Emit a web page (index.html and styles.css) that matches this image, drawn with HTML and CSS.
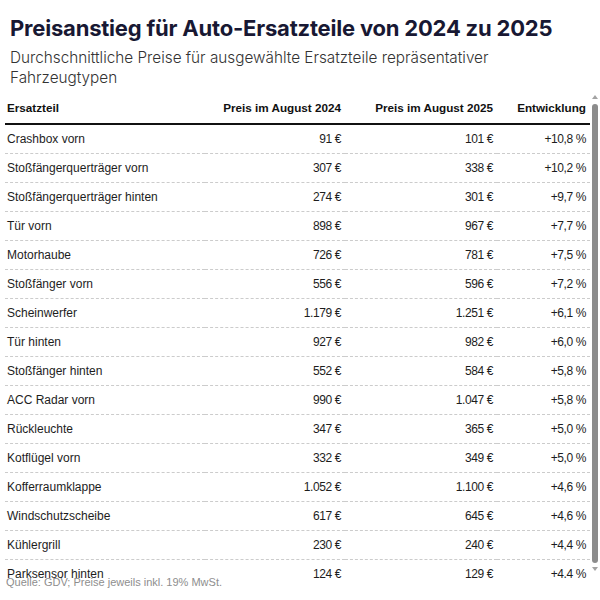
FILE: index.html
```html
<!DOCTYPE html>
<html lang="de">
<head>
<meta charset="utf-8">
<title>Preisanstieg für Auto-Ersatzteile</title>
<link rel="stylesheet" href="styles.css">
</head>
<body>
<header class="head">
  <h1 class="title">Preisanstieg für Auto-Ersatzteile von 2024 zu 2025</h1>
  <p class="subtitle">Durchschnittliche Preise für ausgewählte Ersatzteile repräsentativer Fahrzeugtypen</p>
</header>
<div class="frame">
  <div class="viewport">
    <table class="tbl">
      <colgroup><col class="c1"><col class="c2"><col class="c3"><col class="c4"></colgroup>
      <thead>
        <tr><th class="left">Ersatzteil</th><th>Preis im August 2024</th><th>Preis im August 2025</th><th>Entwicklung</th></tr>
      </thead>
      <tbody>
        <tr><td class="left">Crashbox vorn</td><td>91 €</td><td>101 €</td><td>+10,8 %</td></tr>
        <tr><td class="left">Stoßfängerquerträger vorn</td><td>307 €</td><td>338 €</td><td>+10,2 %</td></tr>
        <tr><td class="left">Stoßfängerquerträger hinten</td><td>274 €</td><td>301 €</td><td>+9,7 %</td></tr>
        <tr><td class="left">Tür vorn</td><td>898 €</td><td>967 €</td><td>+7,7 %</td></tr>
        <tr><td class="left">Motorhaube</td><td>726 €</td><td>781 €</td><td>+7,5 %</td></tr>
        <tr><td class="left">Stoßfänger vorn</td><td>556 €</td><td>596 €</td><td>+7,2 %</td></tr>
        <tr><td class="left">Scheinwerfer</td><td>1.179 €</td><td>1.251 €</td><td>+6,1 %</td></tr>
        <tr><td class="left">Tür hinten</td><td>927 €</td><td>982 €</td><td>+6,0 %</td></tr>
        <tr><td class="left">Stoßfänger hinten</td><td>552 €</td><td>584 €</td><td>+5,8 %</td></tr>
        <tr><td class="left">ACC Radar vorn</td><td>990 €</td><td>1.047 €</td><td>+5,8 %</td></tr>
        <tr><td class="left">Rückleuchte</td><td>347 €</td><td>365 €</td><td>+5,0 %</td></tr>
        <tr><td class="left">Kotflügel vorn</td><td>332 €</td><td>349 €</td><td>+5,0 %</td></tr>
        <tr><td class="left">Kofferraumklappe</td><td>1.052 €</td><td>1.100 €</td><td>+4,6 %</td></tr>
        <tr><td class="left">Windschutzscheibe</td><td>617 €</td><td>645 €</td><td>+4,6 %</td></tr>
        <tr><td class="left">Kühlergrill</td><td>230 €</td><td>240 €</td><td>+4,4 %</td></tr>
        <tr><td class="left">Parksensor  hinten</td><td>124 €</td><td>129 €</td><td>+4,4 %</td></tr>
      </tbody>
    </table>
  </div>
  <div class="sbar" aria-hidden="true">
    <span class="arrow up"></span>
    <span class="thumb"></span>
    <span class="arrow down"></span>
  </div>
</div>
<footer class="foot">Quelle: GDV; Preise jeweils inkl. 19% MwSt.</footer>
</body>
</html>
```

FILE: styles.css
```css
html, body {
  margin: 0;
  padding: 0;
  background: #ffffff;
}
body {
  width: 600px;
  height: 600px;
  overflow: hidden;
  font-family: "Liberation Sans", Arial, sans-serif;
  color: #1d1d1d;
}
.head {
  padding: 14px 10px 0 10px;
}
.title {
  margin: 0;
  font-family: Inter, "Noto Sans", sans-serif;
  font-weight: 700;
  font-size: 22px;
  line-height: 28px;
  letter-spacing: -0.2px;
  color: #181833;
}
.subtitle {
  margin: 6px 0 0 0;
  font-family: Inter, "Noto Sans", sans-serif;
  font-weight: 300;
  font-size: 15.3px;
  line-height: 20px;
  color: #333333;
  width: 500px;
}
.frame {
  display: flex;
  margin: 4px 0 0 5px;
  width: 595px;
  height: 486px;
}
.viewport {
  width: 585px;
  height: 100%;
  overflow: hidden;
}
.sbar {
  width: 10px;
  display: flex;
  flex-direction: column;
  align-items: center;
  padding: 3px 0 7px 0;
  box-sizing: border-box;
}
.arrow {
  width: 0;
  height: 0;
  border-left: 3px solid transparent;
  border-right: 3px solid transparent;
  flex: none;
}
.arrow.up {
  border-bottom: 4px solid #a3a3a3;
}
.arrow.down {
  border-top: 4px solid #a3a3a3;
}
.thumb {
  flex: 1;
  width: 6px;
  margin: 5px 0 4px 0;
  background: #8c8c8c;
  border-radius: 3px;
}
.tbl {
  width: 585px;
  table-layout: fixed;
  border-collapse: collapse;
}
.c1 { width: 200px; }
.c2 { width: 140px; }
.c3 { width: 152px; }
.c4 { width: 93px; }
.tbl th {
  font-size: 11.7px;
  font-weight: 700;
  color: #111111;
  text-align: right;
  height: 31px;
  padding: 0 4px 0 2px;
  border-bottom: 2px solid #111111;
  vertical-align: middle;
}
.tbl td {
  font-size: 12px;
  color: #1d1d1d;
  text-align: right;
  height: 28px;
  padding: 0 4px 0 2px;
  border-bottom: 1px dashed #cccccc;
  vertical-align: middle;
  white-space: nowrap;
}
.tbl td:not(.left) {
  letter-spacing: -0.4px;
}
.tbl .left {
  text-align: left;
}
.foot {
  padding: 0 6px;
  font-size: 11px;
  line-height: 14px;
  color: #8e8e8e;
  margin-top: -3px;
}
```
